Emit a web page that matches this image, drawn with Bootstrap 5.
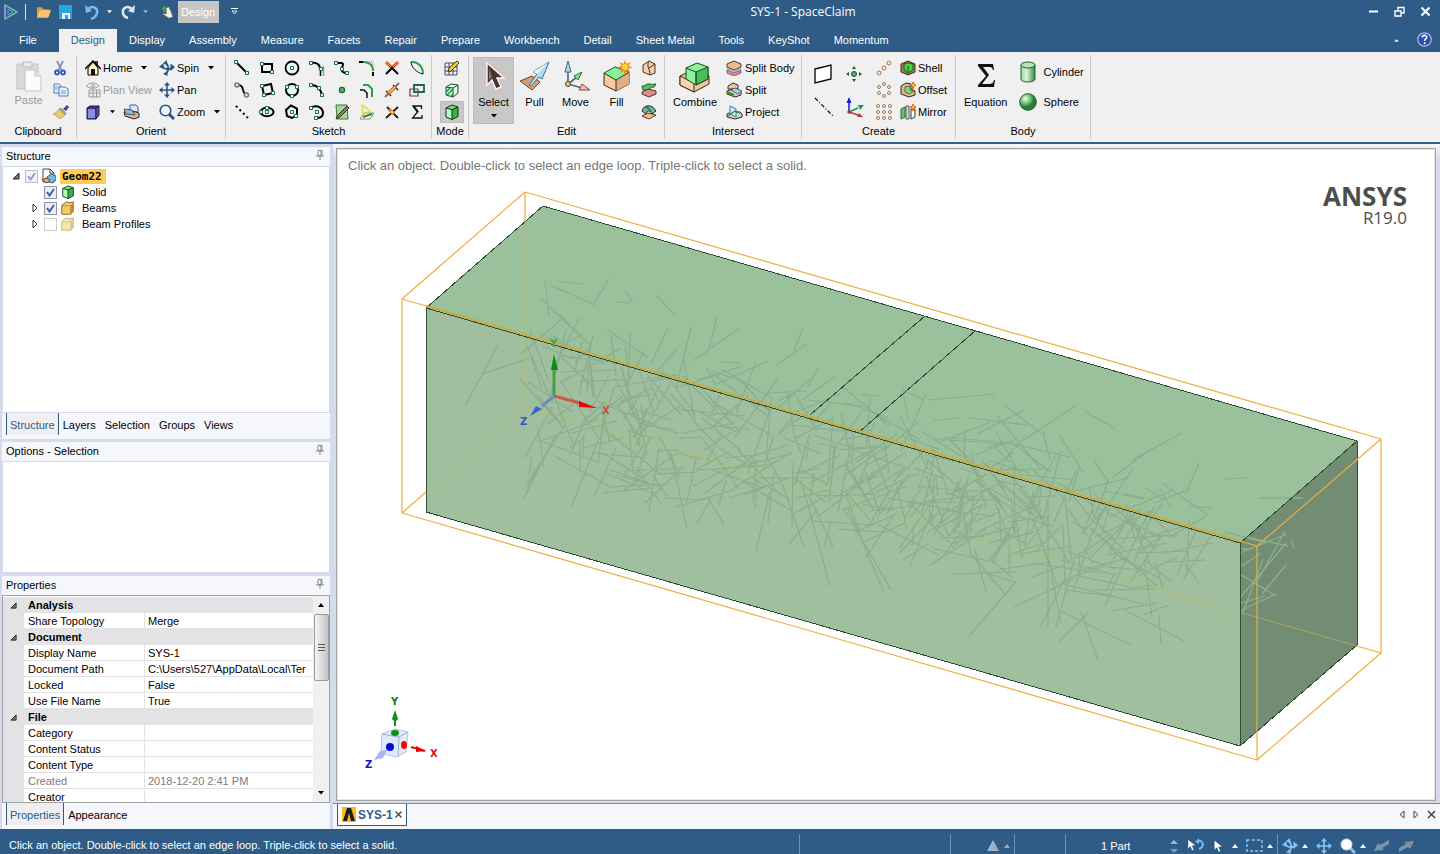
<!DOCTYPE html>
<html lang="en">
<head>
<meta charset="utf-8">
<meta name="viewport" content="width=device-width, initial-scale=1">
<title>SYS-1 - SpaceClaim</title>
<link rel="stylesheet" href="https://cdn.jsdelivr.net/npm/bootstrap@5.3.0/dist/css/bootstrap.min.css">
<style>
:root{--brand:#2e5c86;--ribbon:#f0f0f0;--panel:#f6f6fd;--gutter:#d5dbec;--rule:#c9c9c9}
body{font-family:"Liberation Sans",Arial,sans-serif;font-size:11px;line-height:16px;color:#000;background:var(--panel)}
svg{display:block;flex:none}
.btn{--bs-btn-padding-x:0;--bs-btn-padding-y:0;--bs-btn-font-size:11px;--bs-btn-line-height:16px;--bs-btn-border-width:0;--bs-btn-border-radius:0;--bs-btn-color:#000;--bs-btn-disabled-color:#9a9a9a;--bs-btn-disabled-opacity:1;display:flex;align-items:center;white-space:nowrap}
.app-title{height:23px;background:var(--brand);color:#fff}
.app-name{font:12px/23px "Open Sans","Noto Sans",sans-serif;padding-left:168px}
.title-side{flex:1 1 0}
.qat .btn{height:22px}
.qat-chip.btn{background:#c6c6c6;color:#fff;padding:0 4px 0 3px}
.win-btns{padding-right:2px}
.win-btns .btn{width:26px;height:22px;justify-content:center}
.tab-strip{background:var(--brand);height:29px}
.tab-strip .nav-link{color:#fff;padding:3px 12px 4px;height:23px;line-height:16px;border-radius:0;margin-top:6px}
.tab-strip .file-link{padding:3px 19px 4px;margin-right:3px}
.tab-strip .nav-link.active{background:var(--ribbon);color:var(--brand)}
.ribbon{background:var(--ribbon);height:92px;border-bottom:2px solid #33618e;overflow:hidden}
.rgroup{height:84px;margin-top:3px;border-right:1px solid var(--rule);display:flex;flex-direction:column;justify-content:space-between}
.rgroup>footer{text-align:center;line-height:16px}
.rbody{display:flex;height:66px;margin-top:2px}
.g-clip{width:77px}.g-orient{width:149px}.g-sketch{width:206px}.g-mode{width:37px}.g-edit{width:196px}.g-inter{width:137px}.g-create{width:154px}.g-body{width:135px}
.rcol .btn{height:22px;gap:2px}
.caret-gap{margin-left:7px}
.big.btn{flex-direction:column;height:67px;width:41px;padding-top:3px}
.big.on,.small-on.btn{background:#c8c8c8;box-shadow:inset 0 0 0 1px #bcbcbc}
.sketch-grid{display:grid;grid-template-columns:repeat(8,25px);grid-auto-rows:22px;padding-left:3px;margin-top:2px}
.sketch-grid .btn{justify-content:center}
.workspace{flex:1 1 auto;min-height:0;background:var(--gutter)}
.sidebar{width:333px;padding:3px 3px 0 2px;gap:3px;flex:none}
.pane{background:var(--panel);display:flex;flex-direction:column;min-height:0}
.pane-head{display:flex;justify-content:space-between;align-items:flex-start;height:19px;padding:1px 6px 0 4px;flex:none}
.pane-head h2{font-size:11px;line-height:16px;margin:0;font-weight:400}
.pane-head svg{margin-top:2px}
.pane-main{background:#fff;border:1px solid #d3daea;flex:1 1 auto;min-height:0}
.p-structure{flex:1 1 0}.p-options{height:131px;flex:none}.p-props{height:253px;flex:none}
.pane-tabs{height:26px;padding-left:4px;flex:none}
.pane-tabs .nav-link{color:#000;padding:0 5px 0 4px;height:22px;line-height:24px;border-radius:0}
.pane-tabs .nav-link.active{color:var(--brand);background:#efeff1;border-left:1px solid var(--brand);border-right:1px solid var(--brand);padding:0 3px}
.tree{padding-top:1px}
.tree li{display:flex;align-items:center;height:16px;padding-left:22px}
.tree li.root{padding-left:3px}
.tree svg{margin-right:4px}
.tree input{appearance:none;width:13px;height:13px;margin:0 4px 0 0;border:1px solid #8d929c;background:#e9edf6;flex:none}
.tree input:checked{background-image:url("data:image/svg+xml,%3Csvg xmlns='http://www.w3.org/2000/svg' viewBox='0 0 11 11'%3E%3Cpath d='M2 5l2.500 3.500L9 2' fill='none' stroke='%234360a8' stroke-width='2'/%3E%3C/svg%3E")}
.tree input.faint{opacity:.6}
.tree input.off{border-color:#ccc;background:#fff}
.tree label{line-height:16px;padding-left:3px}
.tree .root-name{background:#ffcb57;font:700 11px/15px "DejaVu Sans Mono","Liberation Mono",monospace;padding:0 4px 0 2px}
.twist{width:19px;flex:none}
.twist svg{margin:0 auto}
.prop-box{border:1px solid #a0a0a0;overflow:hidden;display:flex}
.prop-scroll{flex:1 1 auto;overflow:hidden;min-width:0}
.props{table-layout:fixed;width:100%;border-collapse:separate;border-spacing:0;margin-top:1px}
.props td,.props th{height:16px;line-height:16px;padding:0 0 0 4px;font-weight:400;white-space:nowrap;overflow:hidden;box-shadow:inset 0 -1px #e3e3e6}
.props td{padding-left:3px;border-left:1px solid #e3e3e6}
.props .gut{background:#e3e3e6;padding:0;border:0}
.props .cat th,.props .cat td{background:#e3e3e6;font-weight:700}
.dim{color:#7c7c7c}
.sbar{width:16px;background:#f0f0f0;flex:none;display:flex;flex-direction:column;align-items:center}
.sbar .arrow{height:18px;display:flex;align-items:center}
.thumb{width:15px;height:67px;border:1px solid #999;border-radius:2px;background:linear-gradient(90deg,#f6f6f6,#dcdcdc 50%,#c3c3c6);display:flex;align-items:center;justify-content:center}
.viewer{min-width:0;background:var(--panel)}
.stage-wrap{flex:1 1 auto;min-height:0;padding:4px 4px 2px 3px;background:linear-gradient(#f4f6fc 0,#d5dbec 16px)}
.stage{position:relative;height:100%;background:#fff;border:1px solid #a5a59a;outline:1px solid #e8e6d8;outline-offset:-2px;overflow:hidden}
.stage>svg{width:100%;height:100%}
.hint{position:absolute;left:11px;top:8px;font-size:13px;line-height:18px;color:#757575}
.brand{position:absolute;right:28px;top:34px;text-align:right;color:#4d4d4d;font-family:"Open Sans","Noto Sans",sans-serif}
.brand b{display:block;font-size:26px;line-height:26px;font-weight:700}
.brand span{display:block;font-size:17px;line-height:18px}
.doc-tabs{height:26px;flex:none;border-top:1px solid #7c85a5;padding:0 4px 0 4px}
.doc-tab{height:22px;border:1px solid var(--brand);border-top:0;background:#fff;padding:0 4px 0 4px;gap:2px}
.doc-tab a{color:var(--brand);font-weight:700;font-size:12px;text-decoration:none}
.status{height:25px;flex:none;background:var(--brand);color:#fff;overflow:hidden}
.status .cell{height:20px;margin-top:5px;padding-top:3px;border-left:1px solid #6d91b3;display:flex;align-items:center}
.status .msg{padding:8px 0 0 9px;line-height:17px;flex:1 1 0;white-space:nowrap}
.status .btn{height:17px}
.part-count{padding-left:35px;width:103px}
</style>
</head>
<body>
<svg width="0" height="0" class="position-absolute" aria-hidden="true">
  <symbol id="down" viewBox="0 0 6 4"><path d="M0 0h6L3 3.500z" fill="currentColor"/></symbol>
  <symbol id="up" viewBox="0 0 6 4"><path d="M0 4h6L3 0z" fill="currentColor"/></symbol>
  <symbol id="pan" viewBox="0 0 16 16"><path d="M8 2v12M2 8h12" stroke="currentColor" stroke-width="1.600" fill="none"/><path d="M8 0l3 3.500H5zM8 16l3-3.500H5zM0 8l3.500-3v6zM16 8l-3.500-3v6z" fill="currentColor"/></symbol>
  <symbol id="spin" viewBox="0 0 16 16"><path d="M6 2.500c4 1 4 9 1 11M3 6.500c3 3.500 8 3.500 11 1" stroke="currentColor" stroke-width="1.800" fill="none"/><path d="M4 3l4-3v5.500zM4 14l4.500-3v5zM0 7l4.500-4 .5 6zM16 7l-4.500-3.500V11z" fill="currentColor"/></symbol>
  <symbol id="tree-open" viewBox="0 0 8 8"><path d="M7 1v6H1z" fill="#777" stroke="#222"/></symbol>
  <symbol id="tree-shut" viewBox="0 0 8 10"><path d="M2 1v8l4-4z" fill="#fff" stroke="#333"/></symbol>
  <symbol id="pin" viewBox="0 0 8 10"><path d="M2 .5h4v5H2zM5 .5v5M0 6h8M4 6v4" stroke="#888" fill="none"/></symbol>
  <symbol id="n" viewBox="0 0 4 4"><path d="M.5.5h3v3h-3z" fill="#e6fff0" stroke="#176b45"/></symbol>
  <symbol id="cursor" viewBox="0 0 12 16"><path d="M1 1v12l3-3 2 5 2.500-1-2-5H11z" fill="#fff" stroke="#1d3c59" stroke-width=".7"/></symbol>
  <symbol id="gcube" viewBox="0 0 16 16"><path d="M2 4l6-3 6 2v9l-6 3.500L2 12z" fill="#7be383"/><path d="M2 4l6 1.500V15.500L2 13z" fill="#b8ffb8"/><path d="M8 5.500L14 3v9.500l-6 3z" fill="#39b04a"/><path d="M2 4l6-3 6 2v9.500l-6 3L2 13zM2 4l6 1.500L14 3M8 5.500v10" fill="none" stroke="#0b3312"/></symbol>
  <symbol id="folder" viewBox="0 0 16 16"><path d="M1 5l5-4 4 1 4-1v11l-3 3H1z" fill="#f0cf6e" stroke="#6e561b"/><path d="M1 15V6l10-1v10z" fill="#f3cd62" stroke="#8f7229" stroke-width=".7"/><path d="M11 5l3-3v10l-3 3z" fill="#c39425"/></symbol>
</svg>

<div class="d-flex flex-column vh-100 overflow-hidden">

<header>
  <div class="app-title d-flex align-items-center">
    <div class="title-side qat d-flex align-items-center">
      <svg class="ms-1" width="14" height="16" viewBox="0 0 14 16" fill="none"><path d="M1 1l12 7-12 7z" stroke="#63c3a0" stroke-width="1.500"/><path d="M1 1v14" stroke="#a982cf" stroke-width="1.500"/><path d="M4 5l5 3-5 3z" stroke="#6aa5e0"/></svg>
      <svg class="ms-1 me-2" width="6" height="16"><path d="M3.500 0v16" stroke="#d9e2ec"/></svg>
      <button class="btn" aria-label="Open"><svg width="15" height="14" viewBox="0 0 16 14"><path d="M1 13V2h5l2 2h6v2" fill="#e39a31"/><path d="M1 13l3-8h12l-3 8z" fill="#ffc46b"/></svg></button>
      <button class="btn ms-2 me-2" aria-label="Save"><svg width="13" height="14" viewBox="0 0 13 14"><path d="M0 0h13v14H0z" fill="#27a5e2"/><path d="M3 8h8v6H3z" fill="#f4fbff"/><path d="M6 10h3v4H6z" fill="#27a5e2"/></svg></button>
      <button class="btn text-white" aria-label="Undo"><svg class="ms-1" width="16" height="16" viewBox="0 0 16 16"><path d="M4 5c5-4 10-1 9 4-.5 3-3 5-6 6" fill="none" stroke="#7cb9f2" stroke-width="2.500"/><path d="M1 1l1 8 6-2z" fill="#7cb9f2"/></svg><svg class="caret-gap me-2" width="5" height="4"><use href="#down"/></svg></button>
      <button class="btn text-white" aria-label="Redo"><svg width="16" height="16" viewBox="0 0 16 16"><path d="M12 5C7 1 2 4 3 9c.5 3 2 4 5 5" fill="none" stroke="#d7e7f6" stroke-width="2.500"/><path d="M15 1l-1 8-6-2z" fill="#d7e7f6"/></svg><svg class="caret-gap opacity-50 me-2" width="5" height="4"><use href="#down"/></svg></button>
      <button class="btn ms-1 me-1" aria-label="Touch mode"><svg width="14" height="14" viewBox="0 0 16 16"><path d="M2 4h7M5 1v7" stroke="#39b35a" stroke-width="2"/><path d="M7 3l3-1 3 6 2 6-5 1-6-4-1-2 4 1z" fill="#f7ede0" stroke="#555" stroke-width=".8"/></svg></button>
      <button class="btn qat-chip">Design</button>
      <button class="btn ms-2 text-white" aria-label="Customize"><svg class="ms-1" width="7" height="7" viewBox="0 0 7 7"><path d="M0 .5h7" stroke="#fff"/><path d="M1 3h5L3.500 6z" fill="none" stroke="#fff" stroke-width=".8"/></svg></button>
    </div>
    <div class="app-name">SYS-1 - SpaceClaim</div>
    <div class="title-side win-btns d-flex justify-content-end">
      <button class="btn" aria-label="Minimize"><svg width="11" height="11"><path d="M1 5.500h9" stroke="#fff" stroke-width="2"/></svg></button>
      <button class="btn" aria-label="Restore"><svg width="11" height="11" fill="none"><path d="M1 5h6v5H1zM4 5V1.500h6V7H7" stroke="#fff" stroke-width="1.400"/></svg></button>
      <button class="btn" aria-label="Close"><svg width="11" height="11"><path d="M1.500 1.500l8 8M9.500 1.500l-8 8" stroke="#fff" stroke-width="2.200"/></svg></button>
    </div>
  </div>
  <nav class="tab-strip d-flex justify-content-between" aria-label="Ribbon tabs">
    <div class="nav flex-nowrap">
      <a class="nav-link file-link" href="#">File</a><a class="nav-link active" href="#" aria-current="page">Design</a><a class="nav-link" href="#">Display</a><a class="nav-link" href="#">Assembly</a><a class="nav-link" href="#">Measure</a><a class="nav-link" href="#">Facets</a><a class="nav-link" href="#">Repair</a><a class="nav-link" href="#">Prepare</a><a class="nav-link" href="#">Workbench</a><a class="nav-link" href="#">Detail</a><a class="nav-link text-nowrap" href="#">Sheet Metal</a><a class="nav-link" href="#">Tools</a><a class="nav-link" href="#">KeyShot</a><a class="nav-link" href="#">Momentum</a>
    </div>
    <div class="d-flex align-items-center gap-3 pe-2 pt-1">
      <button class="btn" aria-label="Collapse ribbon"><svg width="9" height="6"><path d="M1 5l3.500-3L8 5z" fill="#fff" stroke="#2a3f55" stroke-width=".7"/></svg></button>
      <button class="btn" aria-label="Help"><svg width="15" height="15" viewBox="0 0 15 15"><circle cx="7.500" cy="7.500" r="6.700" fill="#2a49b4" stroke="#a9b9d9" stroke-width="1.300"/><path d="M5.300 5.500c0-3 4.600-2.600 4.400-.2C9.600 6.800 7.600 7 7.600 9" fill="none" stroke="#fff" stroke-width="1.600"/><circle cx="7.600" cy="11.200" r="1" fill="#fff"/></svg></button>
    </div>
  </nav>
</header>

<section class="ribbon d-flex" aria-label="Design tools">
  <div class="rgroup g-clip">
    <div class="rbody ps-2">
      <button class="btn big" disabled><svg width="26" height="32" viewBox="0 0 26 32"><path d="M1 4h21v25H1z" fill="#dadada" stroke="#c2c2c2"/><path d="M7 2h9v5H7z" fill="#e9e9e9" stroke="#bdbdbd"/><path d="M9 10h10l6 6v15H9z" fill="#fbfbfb" stroke="#c4c4c4"/><path d="M19 10v6h6" fill="#e5e5e5" stroke="#c4c4c4"/></svg><span>Paste</span></button>
      <div class="rcol ms-1">
        <button class="btn" aria-label="Cut"><svg width="14" height="16" viewBox="0 0 14 16"><path d="M4 1l5 10M10 1L5 11" stroke="#7991c5" stroke-width="1.700"/><g fill="none" stroke="#3459aa" stroke-width="1.800"><circle cx="4" cy="12.500" r="2"/><circle cx="10" cy="12.500" r="2"/></g></svg></button>
        <button class="btn" aria-label="Copy"><svg width="16" height="14" viewBox="0 0 16 14"><path d="M1 1h5l2 2v7H1z" fill="#e8f1ff" stroke="#507bc0"/><path d="M6 4h6l3 2v7H6z" fill="#e8f1ff" stroke="#507bc0"/><path d="M2 4h4M2 6h3M8 8h5M8 10h5" stroke="#6f9ad8"/></svg></button>
        <button class="btn" aria-label="Format painter"><svg width="16" height="14" viewBox="0 0 16 14"><path d="M10 4l4-4 2 2-3 4z" fill="#3d468c"/><path d="M8 3l5 5-1 2-6-6z" fill="#aab" stroke="#556" stroke-width=".5"/><path d="M6 4l6 6-5 4c-2-1-4-4-7-5 3-1 4-2 6-5z" fill="#e8cb6e" stroke="#a5852b" stroke-width=".6"/></svg></button>
      </div>
    </div>
    <footer>Clipboard</footer>
  </div>

  <div class="rgroup g-orient">
    <div class="rbody ps-2">
      <div class="rcol" style="width:74px">
        <button class="btn"><svg width="16" height="16" viewBox="0 0 16 16"><path d="M10 1h3v5h-3z" fill="#901c1c"/><path d="M3 8l5-6 5 6v7H3z" fill="#fff4c4" stroke="#000"/><path d="M0 9l8-8 8 8" fill="none" stroke="#000" stroke-width="1.500"/><path d="M6 9h4v6H6z" fill="#111"/></svg>Home<svg class="caret-gap" width="6" height="4"><use href="#down"/></svg></button>
        <button class="btn" disabled><svg width="16" height="16" viewBox="0 0 16 16" fill="none" stroke="#9a9a9a"><path d="M1 4c4-4 9-4 13 0-4 3-9 3-13 0z"/><circle cx="8" cy="4" r="1.500"/><path d="M4 8h11v7H4zM4 11h11M8 8v7M11.500 8v7"/></svg>Plan View</button>
        <div class="d-flex">
          <button class="btn" aria-label="View cube"><svg width="16" height="16" viewBox="0 0 16 16"><path d="M2 4l3-2h9v9l-3 4H2z" fill="#5653b5" stroke="#17163f"/><path d="M3 5h7v9H3z" fill="#8a8be4"/><path d="M2 4h9l3-2M11 4v11" stroke="#17163f" fill="none"/></svg><svg class="caret-gap" width="5" height="4"><use href="#down"/></svg></button>
          <button class="btn ms-2" aria-label="Snap view"><svg width="17" height="16" viewBox="0 0 17 16"><path d="M7 1h6l2 2v5H7z" fill="#dfe4ff" stroke="#4d55a0"/><path d="M1 8l5-2 10 3v4l-5 2L2 12z" fill="#d8b78d" stroke="#223"/><path d="M1 5l8 1 3 5-9-1z" fill="#86b8d8" stroke="#334" stroke-width=".7"/></svg></button>
        </div>
      </div>
      <div class="rcol">
        <button class="btn"><svg width="16" height="16" color="#2a5580"><use href="#spin"/></svg>Spin<svg class="caret-gap" width="6" height="4"><use href="#down"/></svg></button>
        <button class="btn"><svg width="16" height="16" color="#2a5580"><use href="#pan"/></svg>Pan</button>
        <button class="btn"><svg width="16" height="16" viewBox="0 0 16 16"><circle cx="6.500" cy="6.500" r="5.300" fill="#eef6ff" stroke="#2a5580" stroke-width="1.600"/><path d="M10 10l5 5" stroke="#2a5580" stroke-width="3"/></svg>Zoom<svg class="caret-gap" width="6" height="4"><use href="#down"/></svg></button>
      </div>
    </div>
    <footer>Orient</footer>
  </div>

  <div class="rgroup g-sketch">
    <div class="sketch-grid">
      <button class="btn" aria-label="Line"><svg width="16" height="16" viewBox="0 0 16 16"><path d="M2 2l12 12" stroke="#000" stroke-width="2"/><use href="#n" width="4" height="4"/><use href="#n" x="11" y="11" width="4" height="4"/></svg></button>
      <button class="btn" aria-label="Rectangle"><svg width="16" height="16" viewBox="0 0 16 16"><path d="M3 4h10v8H3z" fill="none" stroke="#000" stroke-width="2"/><use href="#n" x="1" y="2" width="4" height="4"/><use href="#n" x="11" y="10" width="4" height="4"/></svg></button>
      <button class="btn" aria-label="Circle"><svg width="16" height="16" viewBox="0 0 16 16"><circle cx="8" cy="8" r="6.500" fill="none" stroke="#000" stroke-width="1.800"/><use href="#n" x="6" y="6" width="4" height="4"/></svg></button>
      <button class="btn" aria-label="Tangent arc"><svg width="16" height="16" viewBox="0 0 16 16"><path d="M2 3c5-1 9 1 9 6" fill="none" stroke="#000" stroke-width="2"/><path d="M14.500 6v10" stroke="#999" stroke-width="1.500"/><path d="M11.500 11v5" stroke="#000" stroke-width="1.500"/><use href="#n" y="1" width="4" height="4"/><use href="#n" x="10" y="7" width="4" height="4"/></svg></button>
      <button class="btn" aria-label="Spline"><svg width="16" height="16" viewBox="0 0 16 16"><path d="M2 3h5c5 0-1 5 1 8 1 2 3 2 6 2" fill="none" stroke="#000" stroke-width="2"/><use href="#n" y="1" width="4" height="4"/><use href="#n" x="6" y="7" width="4" height="4"/><use href="#n" x="11" y="11" width="4" height="4"/></svg></button>
      <button class="btn" aria-label="Rounded corner"><svg width="16" height="16" viewBox="0 0 16 16"><path d="M0 2h4M14 12v4" stroke="#000" stroke-width="2"/><path d="M4 2c6 0 10 3 10 9" fill="none" stroke="#29a04b" stroke-width="2"/><path d="M8 1.500h6V7" stroke="#c77" stroke-dasharray="1 1" fill="none"/></svg></button>
      <button class="btn" aria-label="Trim away"><svg width="16" height="16" viewBox="0 0 16 16"><path d="M2 2l6 6 6-6" stroke="#e23b1c" stroke-width="3" fill="none"/><path d="M2 2l6 6 6-6" stroke="#ffc93c" stroke-dasharray="2 1" fill="none"/><path d="M2 14l6-6 6 6" stroke="#000" stroke-width="2" fill="none"/></svg></button>
      <button class="btn" aria-label="Bend"><svg width="16" height="16" viewBox="0 0 16 16"><path d="M2 2c7-1 12 5 12 12" fill="none" stroke="#29a04b" stroke-width="2"/><path d="M2 2c0 5 6 11 12 12" fill="none" stroke="#111"/></svg></button>

      <button class="btn" aria-label="Tangent line"><svg width="16" height="16" viewBox="0 0 16 16"><path d="M4 3c7 0 3 7 8 10" stroke="#111" stroke-width="2" fill="none"/><g fill="#eee" stroke="#777" stroke-width="1.600"><circle cx="3" cy="3" r="2"/><circle cx="12.500" cy="13" r="2"/></g></svg></button>
      <button class="btn" aria-label="Three-point rectangle"><svg width="16" height="16" viewBox="0 0 16 16"><path d="M3 4l9-2 2 9-9 2z" fill="none" stroke="#000" stroke-width="2"/><use href="#n" x="1" y="2" width="4" height="4"/><use href="#n" x="12" y="9" width="4" height="4"/><use href="#n" x="3" y="11" width="4" height="4"/></svg></button>
      <button class="btn" aria-label="Three-point circle"><svg width="16" height="16" viewBox="0 0 16 16"><circle cx="8" cy="8" r="6" fill="none" stroke="#000" stroke-width="2"/><use href="#n" x="1" y="3" width="4" height="4"/><use href="#n" x="11" y="3" width="4" height="4"/><use href="#n" x="6" y="12" width="4" height="4"/></svg></button>
      <button class="btn" aria-label="Three-point arc"><svg width="16" height="16" viewBox="0 0 16 16"><path d="M2 3c6 0 10 4 11 11" fill="none" stroke="#000" stroke-width="2"/><use href="#n" y="1" width="4" height="4"/><use href="#n" x="8" y="4" width="4" height="4"/><use href="#n" x="11" y="11" width="4" height="4"/></svg></button>
      <button class="btn" aria-label="Point"><svg width="16" height="16" viewBox="0 0 16 16"><circle cx="8" cy="8" r="2.600" fill="#69a86f" stroke="#176b35" stroke-width="1.300"/></svg></button>
      <button class="btn" aria-label="Offset curve"><svg width="16" height="16" viewBox="0 0 16 16"><path d="M1 8h4l3 3v5" stroke="#111" stroke-width="1.500" fill="none"/><path d="M4 3h5l4 4v8" stroke="#29a04b" stroke-width="2" fill="none"/></svg></button>
      <button class="btn" aria-label="Create corner"><svg width="16" height="16" viewBox="0 0 16 16"><path d="M1 15l4-4M11 5l4-4" stroke="#777" stroke-width="2"/><path d="M2 9l5 5M9 3l5 5" stroke="#222" stroke-width="1.400"/><path d="M4 12l8-8" stroke="#e8551f" stroke-width="3.500"/><path d="M5 11l6-6" stroke="#ffcc35" stroke-width="1.500"/></svg></button>
      <button class="btn" aria-label="Scale"><svg width="16" height="16" viewBox="0 0 16 16" fill="none"><path d="M1 7h8v7H1z" stroke="#8e2840" stroke-width="1.200"/><path d="M5 3h10v7H5z" stroke="#116b4b" stroke-width="1.800"/></svg></button>

      <button class="btn" aria-label="Construction line"><svg width="16" height="16" viewBox="0 0 16 16"><path d="M2 2l12 12" stroke="#000" stroke-width="2" stroke-dasharray="2 3"/></svg></button>
      <button class="btn" aria-label="Ellipse"><svg width="16" height="16" viewBox="0 0 16 16"><ellipse cx="8" cy="8" rx="6.500" ry="4.200" fill="none" stroke="#000" stroke-width="2"/><use href="#n" y="6" width="4" height="4"/><use href="#n" x="6" y="2" width="4" height="4"/><use href="#n" x="6" y="6" width="4" height="4"/></svg></button>
      <button class="btn" aria-label="Polygon"><svg width="16" height="16" viewBox="0 0 16 16"><path d="M7 1.500l6 3V11l-5 3-5-2-1-6z" fill="none" stroke="#000" stroke-width="2"/><use href="#n" x="6" y="6" width="4" height="4"/><use href="#n" x="10" y="10" width="4" height="4"/></svg></button>
      <button class="btn" aria-label="Sweep arc"><svg width="16" height="16" viewBox="0 0 16 16"><path d="M3 3c6-2 11 1 11 6 0 4-4 5-7 5" fill="none" stroke="#000" stroke-width="2"/><use href="#n" y="2" width="4" height="4"/><use href="#n" x="6" y="6" width="4" height="4"/><use href="#n" x="5" y="12" width="4" height="4"/></svg></button>
      <button class="btn" aria-label="Face curve"><svg width="16" height="16" viewBox="0 0 16 16"><path d="M2 1h11l1 14H3z" fill="#a5d5a4" stroke="#397b3f"/><path d="M2 15l2-4 9-9 2 2-9 9z" fill="#9e8038" stroke="#332"/></svg></button>
      <button class="btn" aria-label="Project to sketch"><svg width="16" height="16" viewBox="0 0 16 16"><path d="M1 15l4-6h10l-4 6z" fill="#fff" stroke="#888"/><path d="M3 1l8 6-7 4z" fill="none" stroke="#e5dd3a" stroke-width="1.400"/><path d="M4 13l9-3" stroke="#258c3e" stroke-width="2"/></svg></button>
      <button class="btn" aria-label="Split curve"><svg width="16" height="16" viewBox="0 0 16 16"><path d="M2 14L14 3M3 3l11 11" stroke="#222" stroke-width="2"/><path d="M5 5l5 5" stroke="#ed6b1f" stroke-width="3"/><circle cx="8" cy="8" r="1.500" fill="#ffd43a"/></svg></button>
      <button class="btn" aria-label="Equation curve"><svg width="16" height="16" viewBox="0 0 16 16"><path d="M12.500 5V2H4l4.500 6L3.500 14h9.500v-3" fill="none" stroke="#111" stroke-width="1.300"/><path d="M4.500 2l4.500 6" stroke="#111" stroke-width="2"/></svg></button>
    </div>
    <footer>Sketch</footer>
  </div>

  <div class="rgroup g-mode">
    <div class="rbody rcol flex-column align-items-center ps-1">
      <button class="btn" aria-label="Sketch mode"><svg width="16" height="16" viewBox="0 0 16 16"><path d="M1 3h12v12H1zM1 7h12M1 11h12M5 3v12M9 3v12" fill="none" stroke="#4b4d6e"/><path d="M4 12l1-4 8-7 2 2-8 8z" fill="#f1cf35" stroke="#443a13"/></svg></button>
      <button class="btn" aria-label="Section mode"><svg width="16" height="16" viewBox="0 0 16 16"><path d="M2 5l5-3 7 1v8l-5 4-7-2z" fill="#dfffe3" stroke="#174d25"/><path d="M2 5l7 1 5-3M9 6v9" fill="none" stroke="#174d25"/><path d="M2 10l4-4M3 13l6-6M7 14l2-2" stroke="#209041" stroke-width="1.600"/></svg></button>
      <button class="btn small-on px-1" aria-label="3D mode"><svg width="16" height="16"><use href="#gcube"/></svg></button>
    </div>
    <footer>Mode</footer>
  </div>

  <div class="rgroup g-edit">
    <div class="rbody ps-1">
      <button class="btn big on"><svg width="24" height="34" viewBox="0 0 24 34"><path d="M5 3v22l5-5 4 9 5-2-4-9h7z" fill="#46332e" stroke="#fff6ea" stroke-width="1.400"/><path d="M7 8v12l3-3z" fill="#8b7770"/></svg><span>Select</span><svg class="mt-1" width="6" height="4"><use href="#down"/></svg></button>
      <button class="btn big"><svg width="32" height="34" viewBox="0 0 32 34"><path d="M1 21l12-5 8 6-8 8z" fill="#d49f74" stroke="#6b452b"/><path d="M10 25l8-11-4-2 16-10-7 17-3-2-8 9z" fill="#b7daf0" stroke="#426984"/><path d="M14 12L30 2 18 14z" fill="#e8f6ff"/></svg><span>Pull</span></button>
      <button class="btn big"><svg width="30" height="34" viewBox="0 0 30 34"><path d="M7 24V9M7 24l9-7M7 24l14 4" stroke="#4b6b83" stroke-width="1.600"/><path d="M7 1l3 11H4z" fill="#b0d8f4" stroke="#426984"/><path d="M21 12l-4 8-4-4z" fill="#8fdb9b" stroke="#28723a"/><path d="M29 30l-11 0 3-6z" fill="#f3bcbc" stroke="#8c3e42"/><circle cx="7" cy="24" r="2.500" fill="#edc85e" stroke="#444"/></svg><span>Move</span></button>
      <button class="btn big"><svg width="30" height="34" viewBox="0 0 30 34"><path d="M2 13v12l12 6 13-7V13l-13 7z" fill="#f4cba6" stroke="#3a2a1d"/><path d="M14 20l13-7v11l-13 7z" fill="#dfae86"/><path d="M2 13l11-6 14 5-13 8z" fill="#8ff09a" stroke="#1a5a28"/><path d="M14 20v11" stroke="#3a2a1d"/><path d="M23 0l1.500 4 4-2-2 4 4 1-4 2 2 4-4-2L23 15l-1.500-4-4 2 2-4-4-2 4-1-2-4 4 2z" fill="#f28d18"/><circle cx="23" cy="7" r="3" fill="#ffd735"/></svg><span>Fill</span></button>
      <div class="rcol ms-1">
        <button class="btn" aria-label="Blend"><svg width="16" height="16" viewBox="0 0 16 16"><path d="M2 5l6-4 6 3v9l-5 2-7-3z" fill="#f6cfad" stroke="#4c3424"/><path d="M8 1c-3 5 1 8 1 14M8 8l6-4" fill="none" stroke="#4c3424"/></svg></button>
        <button class="btn" aria-label="Replace face"><svg width="16" height="16" viewBox="0 0 16 16"><path d="M1 10l6-3 8 2v3l-7 3-7-3z" fill="#dc8e87" stroke="#56302c"/><path d="M1 4c3 1 4-3 8-2 2 1 3 0 6 0l-2 3c-4 0-5 4-11 3z" fill="#5bb96b" stroke="#1e5a2b"/></svg></button>
        <button class="btn" aria-label="Tweak"><svg width="16" height="16" viewBox="0 0 16 16"><path d="M1 12l6-3 8 2-7 4z" fill="#f1bd93" stroke="#5b3b25"/><path d="M1 7c2-7 10-7 14 0l-4 3C9 6 6 6 5 10z" fill="#6fba83" stroke="#222"/><path d="M4 3c3 0 5 3 6 5" stroke="#2b60b0" stroke-width="1.500" fill="none"/></svg></button>
      </div>
    </div>
    <footer>Edit</footer>
  </div>

  <div class="rgroup g-inter">
    <div class="rbody ps-1">
      <button class="btn big px-1 w-auto"><svg width="32" height="34" viewBox="0 0 32 34"><path d="M1 16l8-4 21 4v8l-15 8-14-7z" fill="#f0c49e" stroke="#3a2a1d"/><path d="M1 16l14 7v9l-14-7zM15 23l15-7" fill="#f7d3b2" stroke="#3a2a1d"/><path d="M7 8l11-5 11 4v12l-12 6-10-6z" fill="#8ff09a" stroke="#174f22"/><path d="M17 12l12-5v12l-12 6z" fill="#49bd5b" stroke="#174f22"/><path d="M7 8l10 4v13" fill="none" stroke="#174f22"/></svg><span>Combine</span></button>
      <div class="rcol ms-1 ps-0">
        <button class="btn"><svg width="18" height="16" viewBox="0 0 16 16"><path d="M1 4l7-3 7 3v3l-7 3-7-3z" fill="#edba92" stroke="#523924"/><path d="M1 8l7 3 7-3v1l-7 3-7-3z" fill="#4d9bd8"/><path d="M1 10l7 3 7-3v3l-7 3-7-3z" fill="#e28c91" stroke="#7a333a" stroke-width=".7"/></svg>Split Body</button>
        <button class="btn"><svg width="18" height="16" viewBox="0 0 16 16"><path d="M2 4l5-3 5 2v4H2zM1 9l6-2 8 2v4l-6 2-8-3z" fill="#eac5a2" stroke="#3a2a1d"/><path d="M5 8l4-2 7 3-4 3z" fill="#9ed5f2" stroke="#2f6b95"/><path d="M1 10l7 3" stroke="#23953d" stroke-width="2"/></svg>Split</button>
        <button class="btn"><svg width="18" height="16" viewBox="0 0 16 16"><path d="M1 10l4-2h9l2 2v3l-7 2-8-2z" fill="#d9cdd8" stroke="#2a2530"/><path d="M4 2l6 3v8l-6-3z" fill="#d8eefc" stroke="#3976a8"/><path d="M2 12l7-5 5 2" fill="none" stroke="#23953d" stroke-width="1.500"/></svg>Project</button>
      </div>
    </div>
    <footer>Intersect</footer>
  </div>

  <div class="rgroup g-create">
    <div class="rbody ps-2">
      <div class="rcol d-flex flex-column justify-content-around">
        <button class="btn px-1" aria-label="Plane"><svg width="18" height="20" viewBox="0 0 18 20"><path d="M1 5l16-4v14L1 19z" fill="#fff" stroke="#000" stroke-width="1.300"/></svg></button>
        <button class="btn px-1" aria-label="Axis"><svg width="20" height="20" viewBox="0 0 20 20"><path d="M1 1l18 18" stroke="#000" stroke-width="1.200" stroke-dasharray="4 2 1 2"/></svg></button>
      </div>
      <div class="rcol d-flex flex-column justify-content-around ms-1">
        <button class="btn px-1 py-0" aria-label="Point"><svg width="16" height="16" viewBox="0 0 16 16"><circle cx="8" cy="8" r="2.500" fill="#6ba777" stroke="#14512b"/><path d="M8 0l2 3H6zM8 16l2-3H6zM0 8l3-2v4zM16 8l-3-2v4z" fill="#1d5c36"/></svg></button>
        <button class="btn px-1" aria-label="Origin"><svg width="18" height="20" viewBox="0 0 18 20"><path d="M3 15V5" stroke="#0a1ce0" stroke-width="1.500"/><path d="M3 0l2.500 6h-5z" fill="#0a1ce0"/><path d="M3 15l9-4" stroke="#27915a" stroke-width="1.500"/><path d="M18 8l-6 0 2 5z" fill="#27915a"/><path d="M3 15l9 3" stroke="#b33" stroke-width="1.500"/><path d="M17 20l-6 0 2-4z" fill="#c83232"/><circle cx="3" cy="15" r="1.700" fill="#a33"/></svg></button>
      </div>
      <div class="rcol ms-1">
        <button class="btn px-1" aria-label="Linear pattern"><svg width="16" height="16" viewBox="0 0 16 16" fill="#fff3e4" stroke="#9b7350"><circle cx="3" cy="13" r="2"/><circle cx="8" cy="8" r="2"/><circle cx="13" cy="3" r="2"/></svg></button>
        <button class="btn px-1" aria-label="Circular pattern"><svg width="16" height="16" viewBox="0 0 16 16" fill="#fff3e4" stroke="#9b7350"><circle cx="8" cy="2" r="1.500"/><circle cx="13" cy="5" r="1.500"/><circle cx="13" cy="11" r="1.500"/><circle cx="8" cy="14" r="1.500"/><circle cx="3" cy="11" r="1.500"/><circle cx="3" cy="5" r="1.500"/></svg></button>
        <button class="btn px-1" aria-label="Fill pattern"><svg width="16" height="16" viewBox="0 0 16 16" fill="#fff3e4" stroke="#9b7350"><circle cx="2" cy="2" r="1.500"/><circle cx="8" cy="2" r="1.500"/><circle cx="14" cy="2" r="1.500"/><circle cx="2" cy="8" r="1.500"/><circle cx="8" cy="8" r="1.500"/><circle cx="14" cy="8" r="1.500"/><circle cx="2" cy="14" r="1.500"/><circle cx="8" cy="14" r="1.500"/><circle cx="14" cy="14" r="1.500"/></svg></button>
      </div>
      <div class="rcol ms-1">
        <button class="btn"><svg width="16" height="16" viewBox="0 0 16 16"><path d="M1 4l7-3 7 3v8l-7 3-7-3z" fill="#a77a4d" stroke="#3a2a1d"/><path d="M4 4l4-1 5 1v6l-5 3-4-3z" fill="#4bcf45" stroke="#1a5a28"/><path d="M8 6v7" stroke="#1a5a28"/></svg>Shell</button>
        <button class="btn"><svg width="16" height="16" viewBox="0 0 16 16"><path d="M1 4l5-3 5 1v5l4 2v4l-6 2-8-3z" fill="#d8b78d" stroke="#3a2a1d"/><path d="M5 5l5-1v4l4 1-5 3-4-2z" fill="#89d287" stroke="#286a35" stroke-width=".8"/><path d="M13 0l1 2.500L16 3l-2 1-1 3-1-3-2-1 2-.5z" fill="#ffc52e" stroke="#e2641a"/></svg>Offset</button>
        <button class="btn"><svg width="16" height="16" viewBox="0 0 16 16"><path d="M1 5l4-2v10l-4 2z" fill="#6fbf70" stroke="#286a35"/><path d="M6 2h3v13H6z" fill="#ddd" stroke="#555"/><path d="M11 5h4v8l-4 2z" fill="#fff" stroke="#333"/><path d="M13 0l1 2.500L16 3l-2 1-1 3-1-3-2-1 2-.5z" fill="#ffc52e" stroke="#e2641a"/></svg>Mirror</button>
      </div>
    </div>
    <footer>Create</footer>
  </div>

  <div class="rgroup g-body">
    <div class="rbody ps-2">
      <button class="btn big w-auto"><svg width="24" height="34" viewBox="0 0 24 34"><path d="M4 4h15l1 6h-1c-1-3-2-3-5-3H9l6 8-7 9h7c3 0 4-1 5-4h1l-1 7H4v-2l8-9L4 6z" fill="#111"/></svg><span>Equation</span></button>
      <div class="rcol d-flex flex-column gap-2 mt-1 ms-2 ps-1">
        <button class="btn"><svg class="me-1" width="18" height="22" viewBox="0 0 18 22"><defs><linearGradient id="cyl"><stop stop-color="#9fd6a2"/><stop offset=".4" stop-color="#d7f5d5"/><stop offset="1" stop-color="#3a8a43"/></linearGradient><radialGradient id="sph" cx=".35" cy=".3"><stop stop-color="#eaffea"/><stop offset=".6" stop-color="#72bd78"/><stop offset="1" stop-color="#2d7a39"/></radialGradient></defs><path d="M2 4v14c0 4 14 4 14 0V4" fill="url(#cyl)" stroke="#245c2d"/><ellipse cx="9" cy="4" rx="7" ry="3" fill="#b6e5b5" stroke="#245c2d"/></svg>Cylinder</button>
        <button class="btn"><svg class="me-1" width="18" height="18" viewBox="0 0 19 19"><circle cx="9.500" cy="9.500" r="8.800" fill="url(#sph)" stroke="#245c2d"/></svg>Sphere</button>
      </div>
    </div>
    <footer>Body</footer>
  </div>
</section>

<div class="workspace d-flex">
  <aside class="sidebar d-flex flex-column">
    <section class="pane p-structure">
      <div class="pane-head"><h2>Structure</h2><svg width="8" height="10"><use href="#pin"/></svg></div>
      <ul class="pane-main tree list-unstyled mb-0">
        <li class="root"><span class="twist"><svg width="8" height="8"><use href="#tree-open"/></svg></span><input class="faint" type="checkbox" id="t-root" checked><svg width="14" height="16" viewBox="0 0 14 16"><path d="M1 1h7l4 4v9H1z" fill="#fff" stroke="#444"/><path d="M8 1v4h4" fill="none" stroke="#444"/><path d="M5 9l4-3 5 2v4l-4 3-5-2z" fill="#79b8dc" stroke="#2c6288"/><path d="M0 12l4-2 4 2-3 3z" fill="#e4b07a" stroke="#754a22"/></svg><label class="root-name" for="t-root">Geom22</label></li>
        <li><span class="twist"></span><input type="checkbox" id="t-solid" checked><svg width="14" height="14"><use href="#gcube"/></svg><label for="t-solid">Solid</label></li>
        <li><span class="twist"><svg width="8" height="10"><use href="#tree-shut"/></svg></span><input type="checkbox" id="t-beams" checked><svg width="14" height="14"><use href="#folder"/></svg><label for="t-beams">Beams</label></li>
        <li><span class="twist"><svg width="8" height="10"><use href="#tree-shut"/></svg></span><input class="off" type="checkbox" id="t-prof"><svg class="opacity-50" width="14" height="14"><use href="#folder"/></svg><label for="t-prof">Beam Profiles</label></li>
      </ul>
      <nav class="nav pane-tabs"><a class="nav-link active" href="#">Structure</a><a class="nav-link" href="#">Layers</a><a class="nav-link" href="#">Selection</a><a class="nav-link" href="#">Groups</a><a class="nav-link" href="#">Views</a></nav>
    </section>
    <section class="pane p-options">
      <div class="pane-head"><h2>Options - Selection</h2><svg width="8" height="10"><use href="#pin"/></svg></div>
      <div class="pane-main"></div>
    </section>
    <section class="pane p-props">
      <div class="pane-head"><h2>Properties</h2><svg width="8" height="10"><use href="#pin"/></svg></div>
      <div class="pane-main prop-box">
        <div class="prop-scroll">
          <table class="props">
            <colgroup><col style="width:21px"><col style="width:120px"><col></colgroup>
            <tbody>
            <tr class="cat"><td class="gut"><svg class="mx-auto" width="7" height="7"><use href="#tree-open"/></svg></td><th colspan="2">Analysis</th></tr>
            <tr><td class="gut"></td><th>Share Topology</th><td>Merge</td></tr>
            <tr class="cat"><td class="gut"><svg class="mx-auto" width="7" height="7"><use href="#tree-open"/></svg></td><th colspan="2">Document</th></tr>
            <tr><td class="gut"></td><th>Display Name</th><td>SYS-1</td></tr>
            <tr><td class="gut"></td><th>Document Path</th><td>C:\Users\527\AppData\Local\Ter</td></tr>
            <tr><td class="gut"></td><th>Locked</th><td>False</td></tr>
            <tr><td class="gut"></td><th>Use File Name</th><td>True</td></tr>
            <tr class="cat"><td class="gut"><svg class="mx-auto" width="7" height="7"><use href="#tree-open"/></svg></td><th colspan="2">File</th></tr>
            <tr><td class="gut"></td><th>Category</th><td></td></tr>
            <tr><td class="gut"></td><th>Content Status</th><td></td></tr>
            <tr><td class="gut"></td><th>Content Type</th><td></td></tr>
            <tr class="dim"><td class="gut"></td><th>Created</th><td>2018-12-20 2:41 PM</td></tr>
            <tr><td class="gut"></td><th>Creator</th><td></td></tr>
            </tbody>
          </table>
        </div>
        <div class="sbar"><span class="arrow"><svg width="6" height="4"><use href="#up"/></svg></span><div class="thumb"><svg width="7" height="8"><path d="M0 .5h7M0 3.500h7M0 6.500h7" stroke="#555"/></svg></div><span class="arrow mt-auto"><svg width="6" height="4"><use href="#down"/></svg></span></div>
      </div>
      <nav class="nav pane-tabs"><a class="nav-link active" href="#">Properties</a><a class="nav-link" href="#">Appearance</a></nav>
    </section>
  </aside>

  <main class="viewer d-flex flex-column flex-grow-1">
    <div class="stage-wrap">
      <div class="stage">
        <svg viewBox="337 149 1098 651" role="img" aria-label="Beam model of a rectangular solid with embedded fibres">
          <g stroke-linejoin="round">
            <path d="M543 206L1357 441 1240 543 426 308z" fill="#9bc19c"/>
            <path d="M426 308L1240 543V746L426 512z" fill="#9fbf9f"/>
            <path d="M1240 543L1357 441V645L1240 746z" fill="#728d73"/>
            <path d="M525 222V407L426 492M525 407L1357 646" fill="none" stroke="#d0b64e" stroke-opacity=".6"/>
            <path id="fibres" fill="none" stroke="#86a688" stroke-opacity=".75" stroke-width="1.200"/>
            <path d="M1260 498h43M1240 553l47-19M1242 615l21-56M1240 598l46-55M1258 580l27-49M1240 574l36 22M1240 611l36-17M1262 594l24-29M1240 567l21-14M1246 537l42 9M1292 541l2 8M1240 549h12M1225 532l40 10M1241 603l24-7" fill="none" stroke="#8bb08e" stroke-width="1.300"/>
            <g fill="none" stroke="#2d4f31" shape-rendering="crispEdges">
              <path d="M543 206L1357 441V645L1240 746 426 512V308z"/>
              <path d="M426 308L1240 543L1357 441M1240 543V746M925 316L810 415M975 331L858 433"/>
            </g>
            <g fill="none" stroke="#ecae3c" stroke-width="1.200">
              <path d="M402 299L525 192 1381 439V653L1257 760 402 513z"/>
              <path d="M402 299L1257 546L1381 439M1257 546V760M525 192v30M426 492L402 513M1357 646l24 7"/>
            </g>
            <path d="M426 306L1240 541" stroke="#c9ab45" stroke-width="2"/>
          </g>
          <g stroke-width="3">
            <path d="M554 396V370" stroke="#45a04d"/><path d="M554 354l4 16h-7z" fill="#0a8a12"/>
            <path d="M554 396l26 7" stroke="#cf5649"/><path d="M597 408l-18-7v6z" fill="#f00000"/>
            <path d="M554 396l-12 10" stroke="#6d8cc0"/><path d="M530 416l6-10 6 3z" fill="#3c62d6"/>
          </g>
          <g font-family="DejaVu Sans" font-weight="700" font-size="10">
            <text x="550" y="347" fill="#4fa33e">Y</text><text x="602" y="414" fill="#cf5040">X</text><text x="520" y="425" fill="#3b54c8">Z</text>
            <text x="391" y="705" fill="#0a8013">Y</text><text x="430" y="757" fill="#e01010">X</text><text x="365" y="768" fill="#1418d0">Z</text>
          </g>
          <path d="M382 734l13-5 13 3-2 20-10 5-15-4z" fill="#dceafa" stroke="#b3c4db"/>
          <path d="M382 734l17 3 9-5M399 737l-1 20" fill="none" stroke="#9fb2cb"/>
          <path d="M395 726v-8" stroke="#0a9012" stroke-width="2"/><path d="M395 710l3 9-3 3-3-3z" fill="#0a9012"/>
          <path d="M411 747l14 4" stroke="#e01010" stroke-width="2"/><path d="M426 751l-10-5v6z" fill="#e80000"/>
          <path d="M374 760l6-9 7-1-4 8z" fill="#aeb0f8"/>
          <ellipse cx="395" cy="733" rx="4" ry="3" fill="#089410"/><circle cx="390" cy="747" r="4" fill="#0508e0"/><ellipse cx="404" cy="745" rx="3" ry="4" fill="#f00"/>
        </svg>
        <div class="hint">Click an object. Double-click to select an edge loop. Triple-click to select a solid.</div>
        <div class="brand"><b>ANSYS</b><span>R19.0</span></div>
      </div>
    </div>
    <div class="doc-tabs d-flex justify-content-between">
      <div class="doc-tab d-flex align-items-center"><svg width="14" height="15" viewBox="0 0 14 15"><path d="M0 0h14v15H0z" fill="#fdb827"/><path d="M1 14L5 1h4l4 13h-4L7 6l-2 8z" fill="#1c1c1c"/></svg><a href="#">SYS-1</a><button class="btn" aria-label="Close tab"><svg width="7" height="7"><path d="M.5.5l6 6M6.500.5l-6 6" stroke="#444" stroke-width="1.400"/></svg></button></div>
      <div class="d-flex align-items-center gap-2 pb-1">
        <button class="btn" aria-label="Previous"><svg width="6" height="9"><path d="M5 1v7L1 4.500z" fill="none" stroke="#444"/></svg></button>
        <button class="btn" aria-label="Next"><svg width="6" height="9"><path d="M1 1v7l4-3.500z" fill="none" stroke="#444"/></svg></button>
        <button class="btn" aria-label="Close"><svg width="9" height="9"><path d="M1 1l7 7M8 1L1 8" stroke="#444" stroke-width="1.500"/></svg></button>
      </div>
    </div>
  </main>
</div>

<footer class="status d-flex">
  <div class="msg">Click an object. Double-click to select an edge loop. Triple-click to select a solid.</div>
  <div class="cell" style="width:151px"></div>
  <div class="cell justify-content-end pe-1" style="width:64px"><svg width="14" height="12"><path d="M7 0l6 11H1z" fill="#9db2c6"/></svg><svg class="ms-1 opacity-50" width="6" height="4"><use href="#up"/></svg></div>
  <div class="cell" style="width:51px"></div>
  <div class="cell" style="width:212px">
    <span class="part-count">1 Part</span>
    <button class="btn" aria-label="Filter"><svg width="10" height="14"><path d="M1 5h8L5 1z" fill="#7cbdf5"/><path d="M1 10h8l-4 4z" fill="#8396a8"/></svg></button>
    <button class="btn ms-2" aria-label="Revert selection"><svg width="18" height="15" viewBox="0 0 18 15"><use href="#cursor" width="10" height="14"/><path d="M11 3c4-1 6 3 4 6-1 1-2 2-3 2" fill="none" stroke="#79b8f0" stroke-width="2"/><path d="M8 4l4-4v6z" fill="#79b8f0"/></svg></button>
    <button class="btn ms-2 text-white" aria-label="Select"><svg width="11" height="14"><use href="#cursor"/></svg><svg class="ms-2" width="6" height="4"><use href="#up"/></svg></button>
    <button class="btn ms-2 text-white" aria-label="Box select"><svg width="17" height="13"><path d="M1 1h15v11H1z" fill="none" stroke="#84c4fa" stroke-width="1.500" stroke-dasharray="3 2"/></svg><svg class="ms-1" width="6" height="4"><use href="#up"/></svg></button>
  </div>
  <div class="cell ps-1" style="width:163px">
    <button class="btn text-white" aria-label="Spin"><svg width="16" height="16" color="#84c4fa"><use href="#spin"/></svg><svg class="ms-1" width="6" height="4"><use href="#up"/></svg></button>
    <button class="btn ms-2" aria-label="Pan"><svg width="16" height="16" color="#84c4fa"><use href="#pan"/></svg></button>
    <button class="btn ms-2 text-white" aria-label="Zoom"><svg width="16" height="16"><path d="M10 10l5 5" stroke="#84c4fa" stroke-width="3"/><circle cx="6.500" cy="6.500" r="5.500" fill="#fff" stroke="#bfe0fb"/></svg><svg class="ms-1" width="6" height="4"><use href="#up"/></svg></button>
    <button class="btn ms-2" aria-label="Previous view"><svg width="16" height="12"><path d="M0 11l4-8 2 2 9-5v4L8 8l2 2z" fill="#7d93a8"/></svg></button>
    <button class="btn ms-2" aria-label="Next view"><svg width="16" height="12"><path d="M16 1l-4 8-2-2-9 5V8l7-4-2-2z" fill="#7d93a8"/></svg></button>
  </div>
</footer>
</div>

<script src="https://cdn.jsdelivr.net/npm/bootstrap@5.3.0/dist/js/bootstrap.bundle.min.js"></script>
<script>
// Fibres scattered along the long axis of the solid; a fixed seed keeps them in place.
let seed = 1907;
const rnd = () => (seed = (seed * 16807) % 2147483647) / 2147483647;
let d = 'M465 406L498 345M482 374L530 358M545 280L549 316M550 285L595 305M559 282L585 284M609 279L594 304M625 291L633 303M616 302L630 303M656 295L675 315M717 317L709 349M738 329L693 361M529 475L532 456M803 328L794 350M807 344L776 365M603 493L650 488M610 470L660 487M385 0'
  + 'M861 394L879 396M928 400L995 394M1004 405L1042 434M1077 405L1016 445M1086 412L1114 428M1132 460L1182 433M1199 463L1185 495M1223 479L1246 478M801 480L830 586M848 508L884 592M845 510L891 590M930 565L985 530M952 574L1016 572M969 636L1015 583M1048 500L1048 627M1088 613L1058 642M1081 612L1098 660M1125 610L1184 641M1062 612L1131 645M1060 583L1143 604';
for (let i = 0; i < 470; i++) {
  const along = rnd(), x = 530 + along * 670;
  const y = 392 + along * 158 + (rnd() + rnd() - 1) * 92;
  const a = rnd() * Math.PI, len = 9 + rnd() * 27;
  const dx = Math.cos(a) * len, dy = Math.sin(a) * len;
  d += `M${Math.round(x - dx)} ${Math.round(y - dy)}L${Math.min(1239, Math.round(x + dx))} ${Math.round(y + dy)}`;
}
document.getElementById('fibres').setAttribute('d', d);
</script>
</body>
</html>
